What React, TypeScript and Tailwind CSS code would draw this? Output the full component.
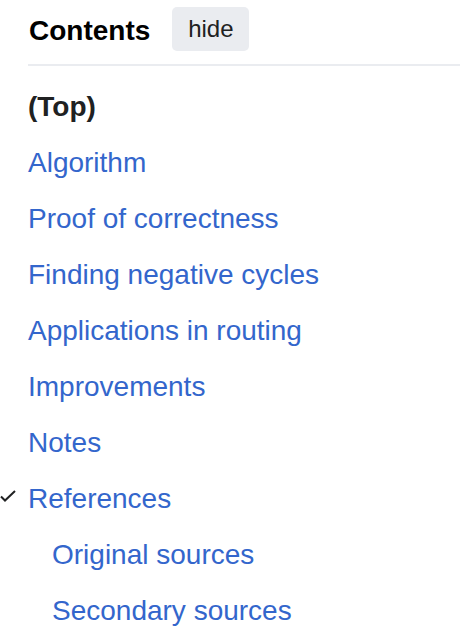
import React from 'react';

const items = [
  { label: 'Algorithm' },
  { label: 'Proof of correctness' },
  { label: 'Finding negative cycles' },
  { label: 'Applications in routing' },
  { label: 'Improvements' },
  { label: 'Notes' },
  { label: 'References', checked: true },
  { label: 'Original sources', sub: true },
  { label: 'Secondary sources', sub: true },
];

export default function App() {
  return (
    <div className="min-h-screen bg-white pl-[28px] font-['Liberation_Sans',Arial,sans-serif]">
      <div className="flex items-center h-[64px] gap-[22px] pl-px">
        <h2 className="text-[28px] font-bold text-black mt-[-2px]">Contents</h2>
        <button className="h-[44px] w-[77px] mt-[-6px] rounded-[5px] bg-[#eaecf0] text-[24px] text-[#202122]">
          hide
        </button>
      </div>
      <div className="h-[2px] mr-[4px] bg-[#eaecf0]" />
      <ul className="mt-[13px]">
        <li className="h-[56px] flex items-center text-[28px] font-bold text-[#202122]">(Top)</li>
        {items.map((it) => (
          <li
            key={it.label}
            className={`relative h-[56px] flex items-center text-[28px] text-[#3366cc] ${it.sub ? 'pl-[24px]' : ''}`}
          >
            {it.checked && (
              <svg
                className="absolute left-[-28px] top-[19px]"
                width="16"
                height="12"
                viewBox="0 0 16 12"
                fill="none"
              >
                <path d="M1 6.5l4 4L15 1" stroke="#202122" strokeWidth="2" />
              </svg>
            )}
            <a>{it.label}</a>
          </li>
        ))}
      </ul>
    </div>
  );
}
